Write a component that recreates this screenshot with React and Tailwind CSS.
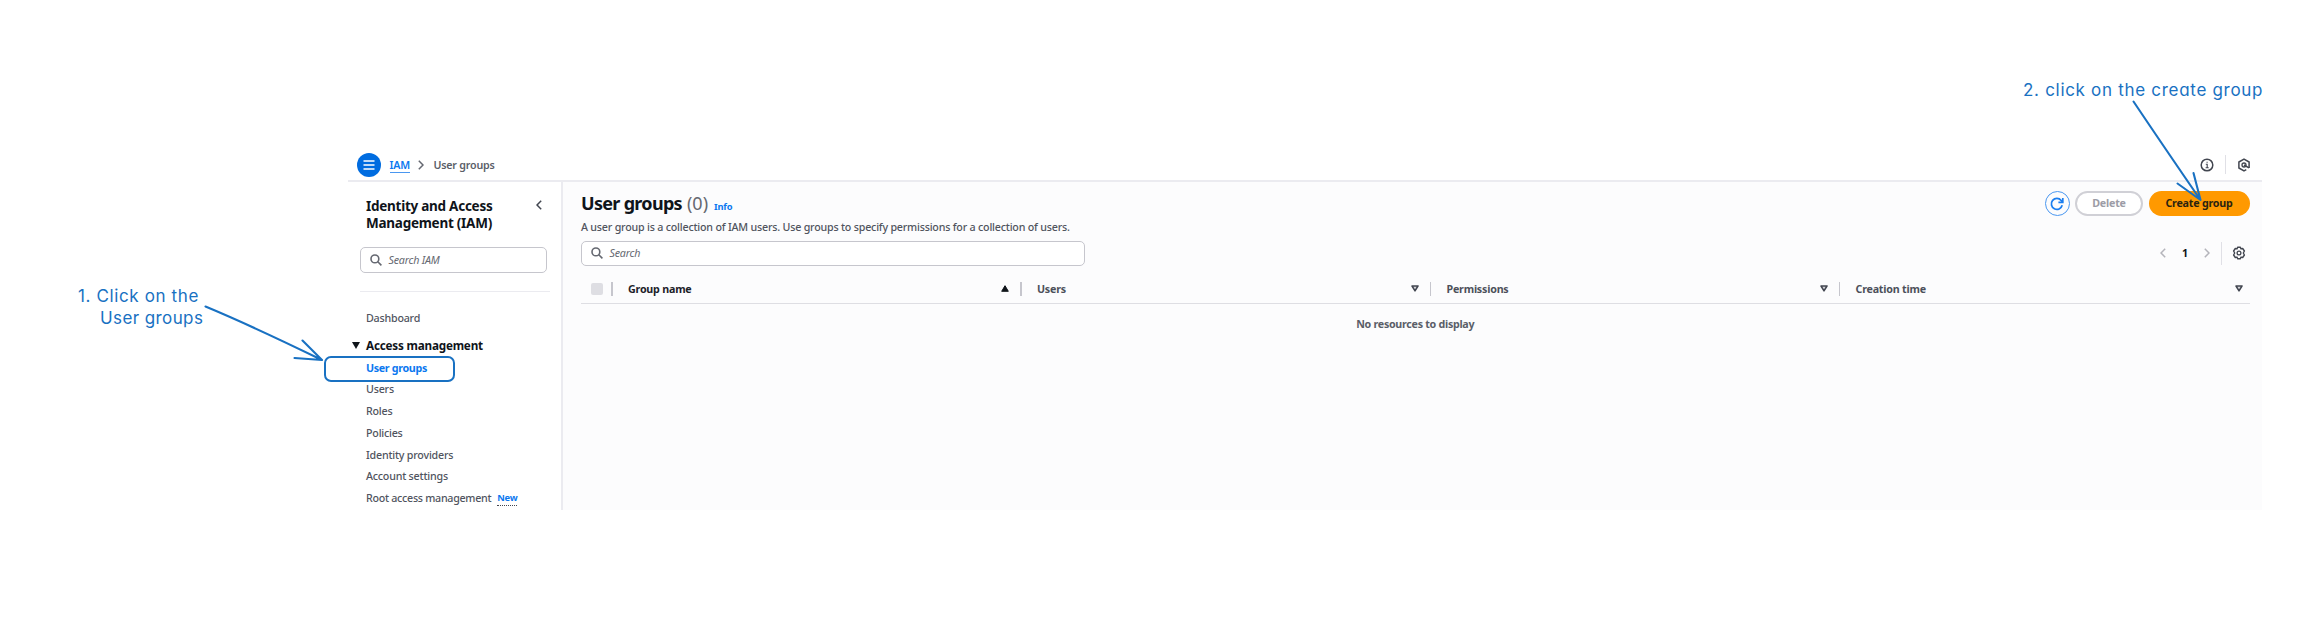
const navItems = ["Users", "Roles", "Policies", "Identity providers", "Account settings"];

function SearchIcon() {
  return (
    <svg className="size-[12px] shrink-0" viewBox="0 0 12 12" fill="none" stroke="#656871" strokeWidth="1.6">
      <circle cx="4.9" cy="4.9" r="3.9" />
      <path d="M7.8 7.8 L11.4 11.4" />
    </svg>
  );
}

function Chevron({ className, flip }) {
  return (
    <svg className={className} viewBox="0 0 6 10" fill="none" stroke="currentColor" strokeWidth="1.5">
      <path d={flip ? "M5.2 0.8 L1 5 L5.2 9.2" : "M0.8 0.8 L5 5 L0.8 9.2"} />
    </svg>
  );
}

function SortIcon({ active }) {
  return active ? (
    <svg className="h-[7px] w-[8px]" viewBox="0 0 8 7">
      <path d="M4 0.7 L7.3 6.3 H0.7 Z" fill="#0f141a" stroke="#0f141a" strokeWidth="1" strokeLinejoin="round" />
    </svg>
  ) : (
    <svg className="mb-px h-[7px] w-[8px]" viewBox="0 0 8 7">
      <path d="M4 5.9 L7 1 H1 Z" fill="#d5d5da" stroke="#424650" strokeWidth="1.5" strokeLinejoin="round" />
    </svg>
  );
}

function Column({ label, active }) {
  return (
    <div className={active ? "flex items-center pr-[11px] text-[#1c2129]" : "flex items-center pr-[11px] text-[#4c505a] last:pr-[7px]"}>
      <span className="h-[14px] w-[1.5px] bg-[#c6c6cd]" />
      <span className="ml-[15.5px] flex-1 pt-[1.5px]">{label}</span>
      <SortIcon active={active} />
    </div>
  );
}

function TopBar() {
  return (
    <header className="flex h-[33px] items-center border-b-2 border-[#ebebf0] pl-[8.5px] pr-[11px] text-[10.7px] tracking-[-0.21px]">
      <span className="flex size-[24px] items-center justify-center rounded-full bg-[#006ce0]">
        <svg className="h-[10px] w-[12px]" viewBox="0 0 12 10" stroke="#fff" strokeWidth="1.5">
          <path d="M0.5 1H11.5M0.5 5H11.5M0.5 9H11.5" />
        </svg>
      </span>
      <span className="ml-[9px] mt-[2.5px] border-b border-[#4a97f0] leading-[14px] font-semibold text-[#0b78f0]">IAM</span>
      <Chevron className="ml-[8.5px] h-[10px] w-[6px] text-[#656871]" />
      <span className="ml-[9px] mt-[1.5px] font-semibold text-[#5a5e68]">User groups</span>
      <svg className="ml-auto size-[14px]" viewBox="0 0 14 14" fill="none" stroke="#424650" strokeWidth="1.5">
        <circle cx="7" cy="7" r="5.8" />
        <path d="M5.8 6.3H7.2V9.8M5.6 9.8H8.7M6.5 4.3H7.7" strokeWidth="1.1" />
      </svg>
      <span className="ml-[11px] h-[19px] w-px bg-[#e0e0e6]" />
      <svg className="ml-[11px] size-[14px]" viewBox="0 0 14 14" fill="none" stroke="#424650" strokeWidth="1.5">
        <path d="M9.3 11.7 L7 12.9 L1.9 10 V4 L7 1.1 L12.1 4 V10" strokeLinejoin="round" />
        <circle cx="7" cy="7" r="2" strokeWidth="1.3" />
        <path d="M7 7 L12 9.8" />
      </svg>
    </header>
  );
}

function Sidebar() {
  return (
    <aside className="w-[215px] shrink-0 border-r-2 border-[#ebebf0] text-[10.7px] tracking-[-0.21px] text-[#50545e]">
      <div className="flex pl-[18px] pr-[19px] pt-[15.5px]">
        <h2 className="flex-1 text-[13.5px] leading-[17px] font-bold tracking-[-0.26px] text-[#0f141a]">
          Identity and Access<br />Management (IAM)
        </h2>
        <Chevron flip className="mt-[2px] h-[10px] w-[6px] text-[#424650]" />
      </div>
      <div className="ml-[12px] mt-[15.5px] flex h-[25.5px] w-[187px] items-center rounded-[5px] border border-[#c6c6cd] pl-[9px]">
        <SearchIcon />
        <span className="ml-[6.5px] italic text-[#656871]">Search IAM</span>
      </div>
      <hr className="ml-[12px] mr-[11px] mt-[18px] border-t-[1.5px] border-[#ebebf0]" />
      <div className="mt-[16px] pl-[18px] font-medium leading-[21.7px]">Dashboard</div>
      <div className="mt-[5px] flex items-center pl-[4px] text-[#0f141a]">
        <svg className="h-[7px] w-[8px]" viewBox="0 0 8 7"><path d="M0 0H8L4 7Z" fill="#0f141a" /></svg>
        <span className="ml-[6px] text-[11.7px] leading-[22px] font-bold tracking-[-0.2px]">Access management</span>
      </div>
      <ul className="mt-[1.5px] pl-[18px] font-medium leading-[21.7px]">
        <li className="font-bold tracking-[-0.32px] text-[#0b78f0]">User groups</li>
        {navItems.map((item) => <li key={item}>{item}</li>)}
        <li className="flex items-center">
          <span className="tracking-[-0.28px]">Root access management</span>
          <span className="ml-[6px] border-b border-dotted border-[#424650] text-[9.3px] leading-[14px] font-bold tracking-[-0.3px] text-[#0b78f0]">New</span>
        </li>
      </ul>
    </aside>
  );
}

function Main() {
  return (
    <main className="flex flex-1 flex-col bg-[#fcfcfd] pl-[18px] pr-[12.5px] text-[10.7px] tracking-[-0.21px] text-[#50545e]">
      <div className="flex pt-[9px]">
        <div className="flex-1">
          <h1 className="flex h-[24px] items-baseline text-[18px] leading-[24px] font-bold text-[#0f141a]">
            <span className="tracking-[-0.69px]">User groups</span>
            <span className="ml-[5px] font-normal tracking-normal text-[#656871]">(0)</span>
            <span className="ml-[6px] text-[9.3px] leading-none text-[#0b78f0]">Info</span>
          </h1>
          <p className="mt-[3.5px] leading-[16px] font-medium tracking-[-0.205px]">
            A user group is a collection of IAM users. Use groups to specify permissions for a collection of users.
          </p>
        </div>
        <div className="flex h-[25px] items-center gap-[5.5px] font-bold">
          <span className="flex size-[25px] items-center justify-center rounded-full border-[1.5px] border-[#4a97f0]">
            <svg className="size-[14px]" viewBox="0 0 14 14" fill="none" stroke="#1a7ef0" strokeWidth="1.7">
              <path d="M12.2 8.3 A5.5 5.5 0 1 1 11.2 3.5 L12.6 5.2" />
              <path d="M12.8 1 V5.4 H8.4" />
            </svg>
          </span>
          <span className="flex h-[25px] w-[68px] items-center justify-center rounded-full border-2 border-[#d0d0d6] bg-white text-[#9c9ca6]">Delete</span>
          <span className="flex h-[25px] w-[101px] items-center justify-center rounded-full bg-[#ff9900] text-[#2a2310]">Create group</span>
        </div>
      </div>
      <div className="mt-[6px] flex items-center">
        <div className="flex h-[25px] w-[504px] items-center rounded-[5px] border border-[#c6c6cd] bg-white pl-[9px]">
          <SearchIcon />
          <span className="ml-[6.5px] italic text-[#656871]">Search</span>
        </div>
        <Chevron flip className="ml-auto h-[10px] w-[6px] text-[#b4b4bb]" />
        <span className="ml-[16px] font-bold text-[#0f141a]">1</span>
        <Chevron className="ml-[16px] h-[10px] w-[6px] text-[#b4b4bb]" />
        <span className="ml-[11px] h-[23px] w-px bg-[#e0e0e6]" />
        <svg className="ml-[10px] mr-[3.5px] size-[14px]" viewBox="0 0 14 14" fill="none" stroke="#424650" strokeWidth="1.4" strokeLinejoin="round">
          <path d="M5.6 1.2H8.4L9 2.9L10.7 2.5L12.4 5L11.3 7L12.4 9L10.7 11.5L9 11.1L8.4 12.8H5.6L5 11.1L3.3 11.5L1.6 9L2.7 7L1.6 5L3.3 2.5L5 2.9Z" />
          <circle cx="7" cy="7" r="1.9" strokeWidth="1.3" />
        </svg>
      </div>
      <div className="mt-[9px] grid h-[29.5px] grid-cols-[30px_409px_409.5px_409px_1fr] items-center border-b-[1.5px] border-[#dedee3] font-bold">
        <span className="ml-[9.5px] size-[12.5px] rounded-[2px] bg-[#dedee3]" />
        <Column label="Group name" active />
        <Column label="Users" />
        <Column label="Permissions" />
        <Column label="Creation time" />
      </div>
      <p className="mt-[11.5px] text-center font-bold tracking-[-0.28px] text-[#5a5e68]">No resources to display</p>
    </main>
  );
}

export default function App() {
  return (
    <div className="relative h-[634px] w-[2320px] bg-white pl-[348px] pt-[149px] font-['Noto_Sans',sans-serif]">
      <div className="flex h-[361px] w-[1914px] flex-col overflow-hidden">
        <TopBar />
        <div className="flex min-h-0 flex-1">
          <Sidebar />
          <Main />
        </div>
      </div>

      <div className="absolute left-[78px] top-[284.5px] font-['Inter',sans-serif] text-[17px] leading-[22.5px] whitespace-pre text-[#1971c2] [font-feature-settings:'cv11']">
        <div className="tracking-[0.62px]">1. Click on the</div>
        <div className="pl-[22px] tracking-[0.4px]">User groups</div>
      </div>
      <div className="absolute left-[2023px] top-[78.5px] font-['Inter',sans-serif] text-[17px] leading-[23px] tracking-[0.7px] whitespace-nowrap text-[#1971c2] [font-feature-settings:'cv11']">
        2. click on the create group
      </div>
      <div className="absolute left-[324px] top-[356px] h-[26px] w-[131px] rounded-[7px] border-2 border-[#1971c2]" />
      <svg className="absolute left-0 top-0 h-[634px] w-[2320px]" viewBox="0 0 2320 634" fill="none" stroke="#1971c2" strokeWidth="2.1" strokeLinecap="round" strokeLinejoin="round">
        <path d="M205.5 306.5 Q250 325 322 360 M302.5 340.5 L322 360 L294.5 358" />
        <path d="M2133.5 101.5 Q2160 141 2200.5 200 M2193.5 173 L2200.5 200 L2177.5 183.5" />
      </svg>
    </div>
  );
}
